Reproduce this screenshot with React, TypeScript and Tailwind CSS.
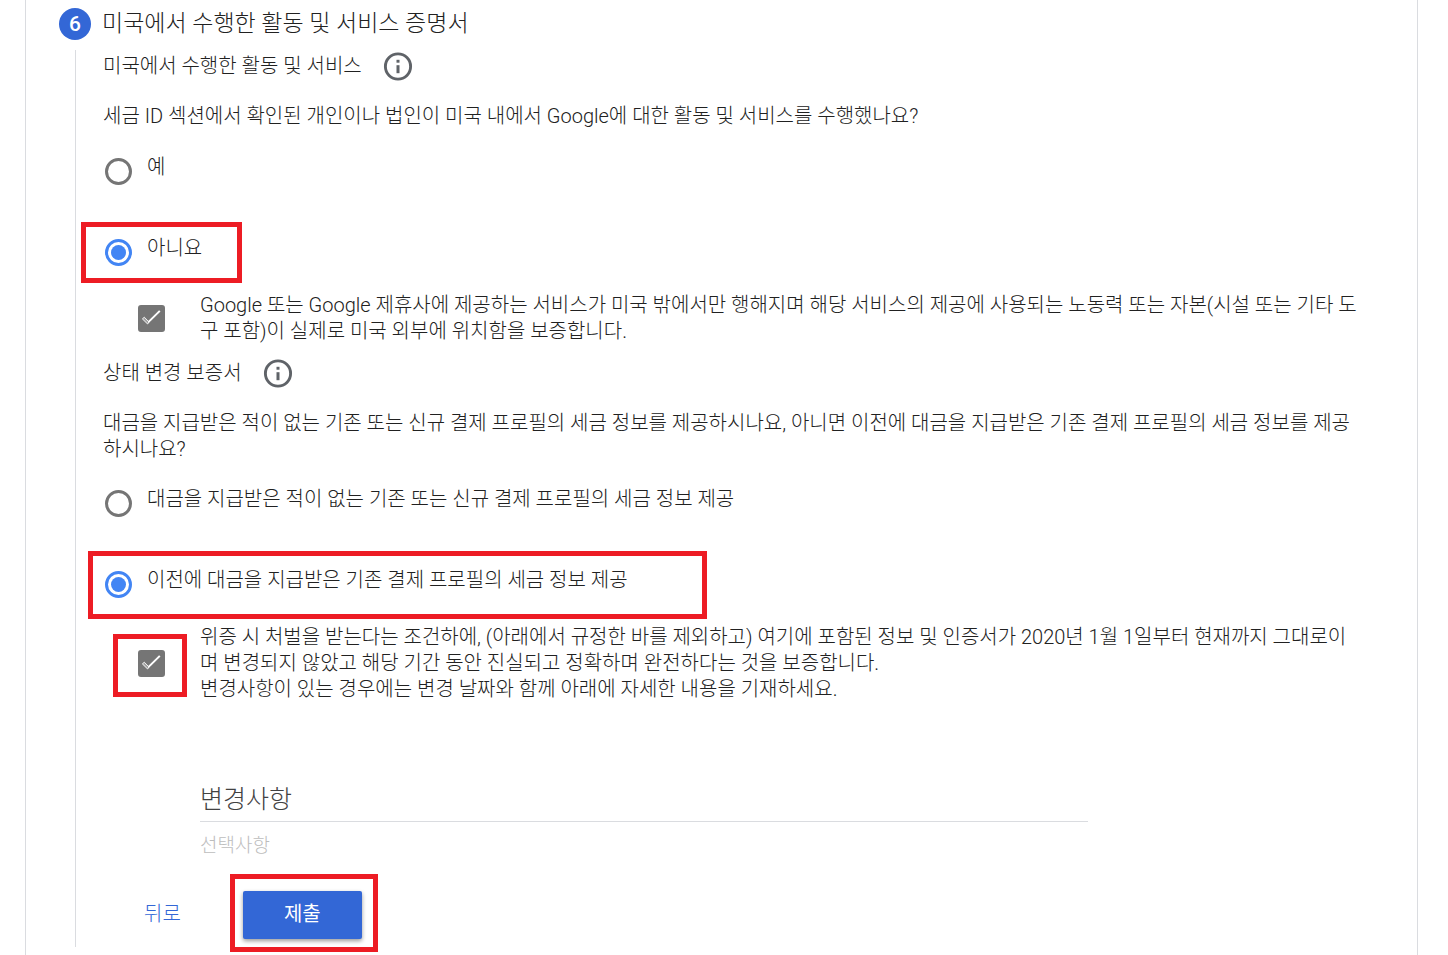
import React, { useState } from "react";

const FONT = "font-['Roboto','Noto_Sans_CJK_KR',sans-serif]";

function InfoButton({ label }: { label: string }) {
  return (
    <button type="button" aria-label={label} className="size-8 shrink-0 text-[#5f6368]">
      <svg viewBox="0 0 32 32" className="size-8" aria-hidden="true">
        <circle cx="16" cy="16.5" r="12.6" fill="none" stroke="currentColor" strokeWidth="2.9" />
        <rect x="14.5" y="9.8" width="3" height="2.9" fill="currentColor" />
        <rect x="14.5" y="15.2" width="3" height="8" fill="currentColor" />
      </svg>
    </button>
  );
}

function Highlight({ place }: { place: string }) {
  return <span aria-hidden="true" className={`pointer-events-none absolute border-[5px] border-[#ed1c24] ${place}`} />;
}

type RadioProps = {
  id: string;
  name: string;
  label: string;
  checked: boolean;
  onChange: () => void;
};

function RadioRow({ id, name, label, checked, onChange }: RadioProps) {
  return (
    <div className="flex h-[32px] items-start gap-[15px] pl-[2px]">
      <input
        id={id}
        type="radio"
        name={name}
        checked={checked}
        onChange={onChange}
        className="mt-[4px] size-[27px] shrink-0 appearance-none rounded-full border-[3px] border-[#757575] bg-clip-content p-[3px] checked:border-[#4285f4] checked:bg-[#4285f4]"
      />
      <label htmlFor={id}>{label}</label>
    </div>
  );
}

function CheckBox({ id }: { id: string }) {
  return (
    <span className="grid size-[27px] shrink-0">
      <input
        id={id}
        type="checkbox"
        defaultChecked
        className="peer col-start-1 row-start-1 size-[27px] appearance-none rounded-[3px] border-2 border-[#757575] checked:bg-[#757575]"
      />
      <svg
        viewBox="0 0 27 27"
        aria-hidden="true"
        className="pointer-events-none invisible col-start-1 row-start-1 size-[27px] peer-checked:visible"
      >
        <path d="M9.6 17.9 L21.8 5.9" fill="none" stroke="#fff" strokeWidth="2" />
        <path d="M4.4 13.9 L6.3 12.2 L11 17 L9.5 18.9 Z" fill="#a3a3a3" stroke="#fff" strokeWidth="0.9" />
      </svg>
    </span>
  );
}

export default function App() {
  const [services, setServices] = useState("no");
  const [status, setStatus] = useState("previous");

  return (
    <div className={`bg-white px-[25px] text-[20px] leading-[26px] font-light text-[#212121] ${FONT}`}>
      <main className="mr-[5px] min-h-screen border-x border-[#dadce0] pt-[8px] pr-[56px] pl-[33px]">
        <header className="flex h-[32px] items-center gap-[11px]">
          <span className="flex size-8 items-center justify-center rounded-full bg-[#3367d6] text-[21px] font-medium text-white">
            6
          </span>
          <h1 className="text-[23px]">미국에서 수행한 활동 및 서비스 증명서</h1>
        </header>

        <div className="mt-[10px] ml-4 border-l border-[#dadce0] pl-[27px]">
          <section>
            <div className="flex h-[32px] items-center gap-[20px]">
              <h2>미국에서 수행한 활동 및 서비스</h2>
              <InfoButton label="활동 및 서비스 안내" />
            </div>
            <p className="mt-[21px]">
              세금 ID 섹션에서 확인된 개인이나 법인이 미국 내에서 Google에 대한 활동 및 서비스를 수행했나요?
            </p>
            <div className="mt-[25px]">
              <RadioRow id="svc-yes" name="services" label="예" checked={services === "yes"} onChange={() => setServices("yes")} />
            </div>
            <div className="relative mt-[49px]">
              <RadioRow id="svc-no" name="services" label="아니요" checked={services === "no"} onChange={() => setServices("no")} />
              <Highlight place="-left-[22px] -top-[13px] h-[61px] w-[161px]" />
            </div>
            <div className="mt-[25px] flex items-center gap-[35px] pl-[35px]">
              <CheckBox id="outside-us" />
              <label htmlFor="outside-us">
                Google 또는 Google 제휴사에 제공하는 서비스가 미국 밖에서만 행해지며 해당 서비스의 제공에 사용되는 노동력 또는 자본(시설 또는 기타 도구 포함)이 실제로 미국 외부에 위치함을 보증합니다.
              </label>
            </div>
          </section>

          <section className="mt-[13px]">
            <div className="flex h-[32px] items-center gap-[20px]">
              <h2>상태 변경 보증서</h2>
              <InfoButton label="상태 변경 보증서 안내" />
            </div>
            <p className="mt-[21px]">
              대금을 지급받은 적이 없는 기존 또는 신규 결제 프로필의 세금 정보를 제공하시나요, 아니면 이전에 대금을 지급받은 기존 결제 프로필의 세금 정보를 제공하시나요?
            </p>
            <div className="mt-[24px]">
              <RadioRow
                id="st-new"
                name="status"
                label="대금을 지급받은 적이 없는 기존 또는 신규 결제 프로필의 세금 정보 제공"
                checked={status === "new"}
                onChange={() => setStatus("new")}
              />
            </div>
            <div className="relative mt-[49px]">
              <RadioRow
                id="st-prev"
                name="status"
                label="이전에 대금을 지급받은 기존 결제 프로필의 세금 정보 제공"
                checked={status === "previous"}
                onChange={() => setStatus("previous")}
              />
              <Highlight place="-left-[15px] -top-[16px] h-[68px] w-[619px]" />
            </div>
            <div className="mt-[25px] flex items-center gap-[35px] pl-[35px]">
              <div className="relative">
                <CheckBox id="perjury" />
                <Highlight place="-left-[25px] -top-[16px] h-[63px] w-[74px]" />
              </div>
              <label htmlFor="perjury">
                위증 시 처벌을 받는다는 조건하에, (아래에서 규정한 바를 제외하고) 여기에 포함된 정보 및 인증서가 2020년 1월 1일부터 현재까지 그대로이며 변경되지 않았고 해당 기간 동안 진실되고 정확하며 완전하다는 것을 보증합니다.
                <br />
                변경사항이 있는 경우에는 변경 날짜와 함께 아래에 자세한 내용을 기재하세요.
              </label>
            </div>
            <div className="mt-[76px] mr-[273px] ml-[97px]">
              <input
                type="text"
                aria-label="변경사항"
                placeholder="변경사항"
                className="block h-[44px] w-full border-b border-[#dadce0] text-[25px] font-normal outline-none placeholder:font-light placeholder:text-[#424242]"
              />
              <p className="mt-[11px] text-[19px] text-[#bdbdbd]">선택사항</p>
            </div>
          </section>

          <div className="mt-[32px] flex h-[56px] items-start gap-[62px] pl-[41px]">
            <button type="button" className="h-[48px] pb-[3px] text-[#3367d6]">
              뒤로
            </button>
            <div className="relative">
              <button
                type="button"
                className="h-[48px] w-[119px] rounded-[2px] bg-[#3367d6] pb-[3px] font-normal text-white shadow-[0_2px_4px_rgba(0,0,0,0.4)]"
              >
                제출
              </button>
              <Highlight place="-left-[13px] -top-[17px] h-[78px] w-[148px]" />
            </div>
          </div>
        </div>
      </main>
    </div>
  );
}
